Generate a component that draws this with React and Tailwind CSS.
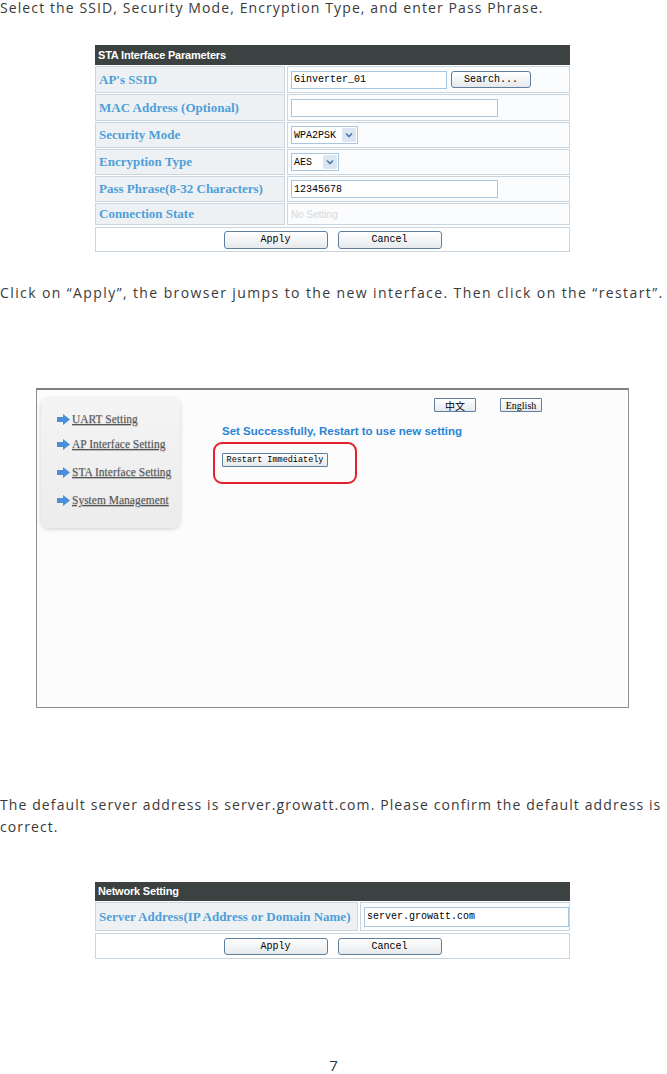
import React from "react";

const Btn = ({
  children,
  className = "",
  size = "text-[10px]",
  font = "font-['Liberation_Mono',monospace]",
  round = "rounded-[3px]",
}) => (
  <div
    className={`flex items-center justify-center whitespace-nowrap border border-[#5f7f9f] bg-gradient-to-b from-white to-[#e6e9ec] text-black ${round} ${font} ${size} ${className}`}
  >
    {children}
  </div>
);

const Label = ({ children, className = "" }) => (
  <div
    className={`flex items-center pl-[3px] whitespace-nowrap bg-[#eef1f4] border border-[#c9d6df] font-['Liberation_Serif',serif] font-bold text-[13px] text-[#4f9fd9] ${className}`}
  >
    {children}
  </div>
);

const Cell = ({ children }) => (
  <div className="flex items-center pl-[3px] gap-[4px] bg-[#fbfcfd] border border-[#c9d6df]">
    {children}
  </div>
);

const Input = ({ value, className = "", h = "h-[18px]" }) => (
  <div
    className={`flex items-center px-[2px] bg-white border border-[#a9c6df] font-['Liberation_Mono',monospace] text-[10px] text-black ${h} ${className}`}
  >
    {value}
  </div>
);

const Select = ({ value, className = "" }) => (
  <div
    className={`h-[18px] flex items-center justify-between pl-[2px] pr-[1px] bg-white border border-[#a9c6df] font-['Liberation_Mono',monospace] text-[10px] text-black ${className}`}
  >
    {value}
    <span className="w-[14px] h-[14px] flex items-center justify-center bg-[#dbe6f1] rounded-[2px]">
      <svg width="8" height="6" viewBox="0 0 8 6">
        <path d="M1 1.5 L4 4.5 L7 1.5" stroke="#4a78b0" strokeWidth="1.6" fill="none" />
      </svg>
    </span>
  </div>
);

const Arrow = () => (
  <svg width="13" height="11" viewBox="0 0 13 11" className="shrink-0">
    <path d="M0 3 H6 V0 L13 5.5 L6 11 V8 H0 Z" fill="#4a90d8" />
  </svg>
);

const SideLink = ({ children, className = "" }) => (
  <div className={`flex items-center gap-[2px] ${className}`}>
    <Arrow />
    <span className="font-['Liberation_Serif',serif] text-[11.5px] leading-[12px] text-[#555] underline [text-shadow:0_1px_1px_#bbb]">
      {children}
    </span>
  </div>
);

const Para = ({ children, className = "", track = "tracking-[1.1px]" }) => (
  <p className={`font-['Open_Sans',sans-serif] text-[14px] leading-[22px] text-[#3a3a3a] ${track} ${className}`}>
    {children}
  </p>
);

export default function App() {
  return (
    <div className="w-[667px] h-[1074px] bg-white flex flex-col">
      <Para className="mt-[-3px]">Select the SSID, Security Mode, Encryption Type, and enter Pass Phrase.</Para>

      {/* STA table */}
      <div className="ml-[95px] mt-[26px] w-[475px] flex flex-col gap-[1px]">
        <div className="h-[20px] bg-[#3c4241] flex items-center pl-[3px] font-['Liberation_Sans',sans-serif] font-bold text-[11px] tracking-[-0.2px] text-white">
          STA Interface Parameters
        </div>
        <div className="grid grid-cols-[190px_1fr] gap-x-[2px] gap-y-[1px]">
          <Label className="h-[27px]">AP's SSID</Label>
          <Cell>
            <Input value="Ginverter_01" className="w-[156px]" />
            <Btn className="w-[80px] h-[17px]">Search...</Btn>
          </Cell>
          <Label className="h-[27px]">MAC Address (Optional)</Label>
          <Cell>
            <Input value="" className="w-[207px]" />
          </Cell>
          <Label className="h-[26px]">Security Mode</Label>
          <Cell>
            <Select value="WPA2PSK" className="w-[67px]" />
          </Cell>
          <Label className="h-[26px]">Encryption Type</Label>
          <Cell>
            <Select value="AES" className="w-[48px]" />
          </Cell>
          <Label className="h-[26px]">Pass Phrase(8-32 Characters)</Label>
          <Cell>
            <Input value="12345678" className="w-[207px]" />
          </Cell>
          <Label className="h-[22px]">Connection State</Label>
          <Cell>
            <span className="font-['Liberation_Sans',sans-serif] text-[10px] text-[#d6d8da]">No Setting</span>
          </Cell>
        </div>
        <div className="mt-[1px] h-[25px] border border-[#c9d6df] bg-white flex items-center justify-center gap-[10px]">
          <Btn className="w-[104px] h-[18px]">Apply</Btn>
          <Btn className="w-[104px] h-[18px]">Cancel</Btn>
        </div>
      </div>

      <Para className="mt-[30px]" track="tracking-[1.4px]">
        Click on “Apply”, the browser jumps to the new interface. Then click on the “restart”.
      </Para>

      {/* restart screenshot */}
      <div className="ml-[36px] mt-[84px] w-[593px] h-[320px] shrink-0 border border-[#8a8f8f] border-t-2 border-t-[#7d8282] bg-[#fcfcfc] flex gap-[42px] pt-[8px] pl-[4px]">
        <div className="w-[139px] h-[130px] rounded-[8px] bg-gradient-to-b from-[#f4f4f4] to-[#ececec] shadow-[0_1px_4px_rgba(0,0,0,0.18)] flex flex-col gap-[13px] pl-[16px] pt-[15px]">
          <SideLink>UART Setting</SideLink>
          <SideLink>AP Interface Setting</SideLink>
          <SideLink className="mt-[3px]">STA Interface Setting</SideLink>
          <SideLink className="mt-[3px]">System Management</SideLink>
        </div>
        <div className="flex flex-col">
          <div className="flex gap-[24px] ml-[212px]">
            <Btn className="w-[42px] h-[14px]" round="rounded-[1px]" font="font-['Noto_Sans_CJK_SC',sans-serif]">
              中文
            </Btn>
            <Btn className="w-[42px] h-[14px]" round="rounded-[1px]" font="font-['Liberation_Serif',serif]">
              English
            </Btn>
          </div>
          <div className="mt-[11px] whitespace-nowrap font-['Liberation_Sans',sans-serif] font-bold text-[11.5px] text-[#2a84d6]">
            Set Successfully, Restart to use new setting
          </div>
          <div className="mt-[2px] ml-[-9px] w-[144px] h-[42px] border-2 border-[#e3202c] rounded-[9px] pt-[9px] pl-[7px]">
            <Btn className="w-[106px] h-[14px]" round="rounded-[1px]" size="text-[8.5px]">
              Restart Immediately
            </Btn>
          </div>
        </div>
      </div>

      <Para className="mt-[86px]">
        The default server address is server.growatt.com. Please confirm the default address is correct.
      </Para>

      {/* Network table */}
      <div className="ml-[95px] mt-[44px] w-[475px] flex flex-col gap-[1px]">
        <div className="h-[19px] bg-[#3c4241] flex items-center pl-[3px] font-['Liberation_Sans',sans-serif] font-bold text-[11px] tracking-[-0.2px] text-white">
          Network Setting
        </div>
        <div className="grid grid-cols-[263px_1fr] gap-x-[2px]">
          <Label className="h-[29px]">Server Address(IP Address or Domain Name)</Label>
          <Cell>
            <Input value="server.growatt.com" h="h-[20px]" className="w-[205px]" />
          </Cell>
        </div>
        <div className="mt-[1px] h-[26px] border border-[#c9d6df] bg-white flex items-center justify-center gap-[10px]">
          <Btn className="w-[104px] h-[17px]">Apply</Btn>
          <Btn className="w-[104px] h-[17px]">Cancel</Btn>
        </div>
      </div>

      <div className="mt-auto h-[18px] leading-[18px] text-center font-['Open_Sans',sans-serif] text-[15px] text-[#333]">7</div>
    </div>
  );
}
